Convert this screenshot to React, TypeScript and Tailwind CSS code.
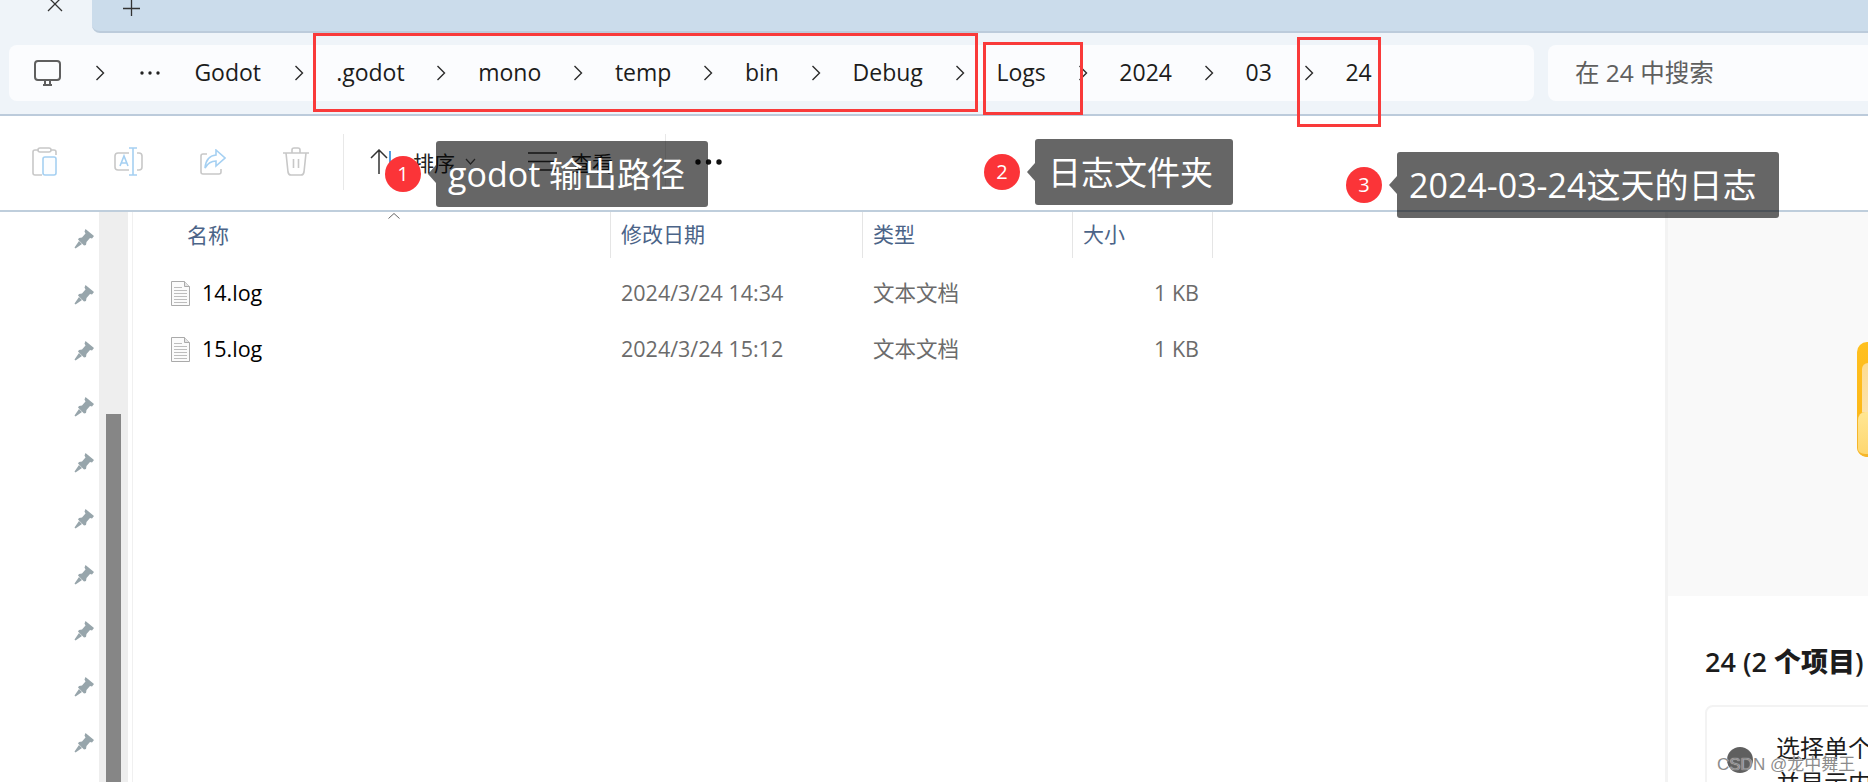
import React from 'react';

const uiFont = '"Open Sans", "Noto Sans CJK SC", sans-serif';

const Chevron = () => (
  <svg width="10" height="16" viewBox="0 0 10 16" fill="none" stroke="#2b2b2b" strokeWidth="1.4" className="shrink-0">
    <path d="M1.5 1 L8.5 8 L1.5 15" />
  </svg>
);

const Pin = () => (
  <svg width="20" height="20" viewBox="0 0 20 20" fill="#97a5ab">
    <path d="M11.5 0 L20 7 L18 9.5 L16 9 L12.5 13 L12 16 L10 16.5 L4 10.5 L5 9 L8 8.5 L11.5 4.5 L10.5 2.5 Z" />
    <path d="M5 12 L8 15 L1.5 19.5 L0.5 18.5 Z" />
  </svg>
);

const FileIcon = () => (
  <svg width="19" height="25" viewBox="0 0 19 25" fill="none" className="shrink-0">
    <path d="M0.5 0.5 H13.5 L18.5 5.5 V24.5 H0.5 Z" fill="#fbfbfb" stroke="#aaaaaa" />
    <path d="M13.5 0.5 V5.5 H18.5" fill="#e4e4e4" stroke="#aaaaaa" />
    <path d="M3 6.5 H11 M3 9.5 H16 M3 12.5 H16 M3 15.5 H16 M3 18.5 H16 M3 21.5 H16" stroke="#bdbdbd" />
  </svg>
);

const Crumb = ({ text, className = '' }: { text: string; className?: string }) => (
  <span className={`shrink-0 text-[#1c1c1c] ${className}`}>{text}</span>
);

// red badge, small arrow and dark label sitting on top of the window
function Callout({ num, text, className, labelClass }: { num: number; text: string; className: string; labelClass: string }) {
  return (
    <div className={`absolute flex items-center ${className}`}>
      <div className="w-[36px] h-[36px] rounded-full bg-[#fb3438] text-white text-[20px] flex items-center justify-center shrink-0">
        {num}
      </div>
      <div className="ml-[7px] w-0 h-0 border-y-[9px] border-y-transparent border-r-[8px] border-r-black/60" />
      <div className={`h-[66px] rounded-[3px] bg-black/60 text-white leading-none flex items-center whitespace-nowrap shrink-0 ${labelClass}`}>
        {text}
      </div>
    </div>
  );
}

const Column = ({ label, className }: { label: string; className: string }) => (
  <div className={`h-[46px] border-r border-[#e5e5e5] flex items-center pl-[10px] text-[#4b6488] shrink-0 ${className}`}>{label}</div>
);

function FileRow({ name, date }: { name: string; date: string }) {
  return (
    <div className="h-[56px] flex items-center text-[21.5px]">
      <div className="w-[478px] pl-[38px] flex items-center gap-[12px] text-black shrink-0">
        <FileIcon />
        <span>{name}</span>
      </div>
      <div className="w-[252px] pl-[10px] text-[#6b6b6b] shrink-0">{date}</div>
      <div className="w-[210px] pl-[10px] text-[#6b6b6b] shrink-0">文本文档</div>
      <div className="w-[126px] text-right text-[#6b6b6b] shrink-0">1 KB</div>
    </div>
  );
}

export default function App() {
  return (
    <div className="relative w-[1868px] h-[783px] overflow-hidden bg-white" style={{ fontFamily: uiFont }}>
      {/* Tab strip */}
      <div className="h-[33px] flex bg-[#eff4f9]">
        <div className="w-[92px] h-full overflow-hidden pl-[47px] shrink-0">
          <svg width="16" height="13" viewBox="0 0 16 13" stroke="#333" strokeWidth="1.3"><path d="M1 -3 L15 11 M15 -3 L1 11" /></svg>
        </div>
        <div className="flex-1 h-[33px] bg-[#cbdceb] rounded-bl-[8px] border-b-2 border-[#bccbdb] pl-[31px]">
          <svg width="17" height="17" viewBox="0 0 17 17" stroke="#333" strokeWidth="1.3"><path d="M8.5 0 V16 M0 8.5 H17" /></svg>
        </div>
      </div>

      {/* Address row */}
      <div className="h-[83px] bg-[#eff4f9] border-b-2 border-[#bccbdb] pt-[12px] pl-[9px] flex gap-[14px]">
        <div className="w-[1525px] h-[56px] rounded-[8px] bg-[#fbfcfe] flex items-center pl-[25px] pb-[1px] gap-[31.8px] text-[23px] shrink-0">
          <svg width="27" height="26" viewBox="0 0 27 26" fill="none" stroke="#5f5f5f" strokeWidth="2" className="mr-[2px] shrink-0">
            <rect x="1" y="1" width="25" height="19" rx="3" />
            <path d="M9 25 H18 M11 21 V24 M16 21 V24" />
          </svg>
          <Chevron />
          <svg width="20" height="4" viewBox="0 0 20 4" fill="#222" className="mx-[3px] shrink-0">
            <circle cx="2" cy="2" r="1.7" /><circle cx="10" cy="2" r="1.7" /><circle cx="18" cy="2" r="1.7" />
          </svg>
          <Crumb text="Godot" className="mr-[1.5px]" /><Chevron />
          <Crumb text=".godot" /><Chevron />
          <Crumb text="mono" /><Chevron />
          <Crumb text="temp" /><Chevron />
          <Crumb text="bin" /><Chevron />
          <Crumb text="Debug" /><Chevron />
          <Crumb text="Logs" /><Chevron />
          <Crumb text="2024" /><Chevron />
          <Crumb text="03" /><Chevron />
          <Crumb text="24" />
        </div>
        <div className="flex-1 h-[56px] rounded-l-[8px] bg-[#fbfcfe] flex items-center pl-[27px] pt-[1px] text-[24.5px] text-[#5f5f5f]">在 24 中搜索</div>
      </div>

      {/* Command bar */}
      <div className="h-[96px] border-b-2 border-[#bfcedc] flex items-center pl-[32px] pb-[3px]">
        <svg width="25" height="29" viewBox="0 0 25 29" fill="none" strokeWidth="1.6" className="shrink-0">
          <path d="M6 3 H3 Q1 3 1 5 V26 Q1 28 3 28 H10 M19 3 H22 Q24 3 24 5 V8" stroke="#c8c8c8" />
          <rect x="6" y="1" width="13" height="4" rx="2" stroke="#c8c8c8" />
          <rect x="11" y="10" width="13" height="18" rx="2" stroke="#a5d0f2" fill="#fbfdff" />
        </svg>
        <svg width="29" height="29" viewBox="0 0 29 29" fill="none" strokeWidth="1.6" className="ml-[57px] shrink-0">
          <path d="M15 6 H4 Q1 6 1 9 V20 Q1 23 4 23 H15 M23 6 H25 Q28 6 28 9 V20 Q28 23 25 23 H23" stroke="#c8c8c8" />
          <path d="M15 1 H23 M19 1 V28 M15 28 H23 M6 19 L10 9 L14 19 M7.5 16 H12.5" stroke="#a5d0f2" />
        </svg>
        <svg width="26" height="26" viewBox="0 0 26 26" fill="none" strokeWidth="1.6" className="ml-[57px] shrink-0">
          <path d="M7 5 H3 Q1 5 1 7 V23 Q1 25 3 25 H19 Q21 25 21 23 V20" stroke="#c8c8c8" />
          <path d="M16 1 L25 9 L16 17 V12 Q9 12 5 19 Q6 7 16 6 Z" stroke="#a5d0f2" />
        </svg>
        <svg width="26" height="29" viewBox="0 0 26 29" fill="none" stroke="#c8c8c8" strokeWidth="1.6" className="ml-[57px] shrink-0">
          <path d="M0 6 H26 M9 6 V3 Q9 1 11 1 H15 Q17 1 17 3 V6 M3 6 L5 25 Q5.5 28 8 28 H18 Q20.5 28 21 25 L23 6 M10.5 12 V21 M15.5 12 V21" />
        </svg>
        <div className="ml-[34px] w-px h-[56px] bg-[#e8e8e8] shrink-0" />
        <svg width="33" height="26" viewBox="0 0 33 26" fill="none" strokeWidth="1.5" className="ml-[26px] shrink-0">
          <path d="M1 9 L9 1 L17 9 M9 1 V25" stroke="#333" />
          <path d="M20 2 V24 L25 19" stroke="#1f7fd6" />
        </svg>
        <span className="ml-[10px] mt-[4px] text-[21px] text-[#222] shrink-0">排序</span>
        <svg width="11" height="7" viewBox="0 0 11 7" fill="none" stroke="#555" strokeWidth="1.2" className="ml-[10px] shrink-0"><path d="M1 1 L5.5 6 L10 1" /></svg>
        <svg width="29" height="19" viewBox="0 0 29 19" stroke="#333" strokeWidth="1.5" className="ml-[52px] shrink-0"><path d="M0 1 H29 M0 9.5 H29 M0 18 H29" /></svg>
        <span className="ml-[14px] mt-[4px] text-[21px] text-[#222] shrink-0">查看</span>
        <div className="ml-[52px] w-px h-[56px] bg-[#e8e8e8] shrink-0" />
        <svg width="27" height="6" viewBox="0 0 27 6" fill="#111" className="ml-[29px] shrink-0">
          <circle cx="3" cy="3" r="2.7" /><circle cx="13.5" cy="3" r="2.7" /><circle cx="24" cy="3" r="2.7" />
        </svg>
      </div>

      {/* Main area */}
      <div className="flex h-[570px]">
        <div className="w-[99px] pt-[17px] pl-[74px] flex flex-col gap-[36px] shrink-0">
          {Array.from({ length: 10 }).map((_, i) => <Pin key={i} />)}
        </div>
        <div className="w-[29px] bg-[#eeeeee] pl-[7px] pt-[202px] shrink-0">
          <div className="w-[15px] h-full bg-[#868686]" />
        </div>
        <div className="w-[4px] shrink-0" />
        <div className="w-px bg-[#f0f0f0] shrink-0" />

        {/* File list */}
        <div className="w-[1533px] shrink-0">
          <div className="relative flex text-[21px]">
            <Column label="" className="w-[478px]" />
            <span className="absolute left-[54px] top-[8px] text-[#4b6488]">名称</span>
            <svg width="12" height="6" viewBox="0 0 12 6" fill="none" stroke="#666" className="absolute left-[255px] top-[1px]"><path d="M0.5 5.5 L6 0.5 L11.5 5.5" /></svg>
            <Column label="修改日期" className="w-[252px]" />
            <Column label="类型" className="w-[210px]" />
            <Column label="大小" className="w-[140px]" />
          </div>
          <div className="pt-[7px]">
            <FileRow name="14.log" date="2024/3/24 14:34" />
            <FileRow name="15.log" date="2024/3/24 15:12" />
          </div>
        </div>

        {/* Details pane */}
        <div className="flex-1 border-l-[3px] border-[#f3f3f3] flex flex-col overflow-hidden -ml-[1px]">
          <div className="h-[384px] bg-[#f9f9f9] pt-[130px] pl-[189px] shrink-0">
            <div className="relative w-[40px] h-[115px] rounded-l-[10px] bg-gradient-to-b from-[#ffc01f] to-[#fbb416] overflow-hidden">
              <div className="absolute left-[5px] top-[21px] w-[40px] h-[60px] rounded-tl-[6px] bg-gradient-to-b from-[#fddc90] to-[#fce3b0]" />
              <div className="absolute left-0 top-[70px] w-[40px] h-[45px] rounded-l-[8px] bg-gradient-to-b from-[#ffe693] to-[#fed76f] border-b-[3px] border-l border-[#f6b62a]" />
            </div>
          </div>
          <div className="pl-[37px] pt-[48px]">
            <div className="text-[27px] leading-[36px] font-semibold text-[#1c1c1c] whitespace-nowrap">24 (2 <b>个项目</b>)</div>
            <div className="mt-[25px] w-[400px] h-[120px] border-2 border-[#f3f3f3] rounded-[8px] flex items-start pt-[23px] pl-[20px]">
              <div className="mt-[17px] w-[26px] h-[26px] rounded-full bg-[#5f5f5f] shrink-0" />
              <div className="ml-[23px] text-[24px] leading-[35px] text-[#1c1c1c] whitespace-nowrap">选择单个<br />并显示内</div>
            </div>
          </div>
        </div>
      </div>

      {/* Annotations */}
      <div className="absolute left-[313px] top-[33px] w-[665px] h-[79px] border-[3px] border-[#f93a3a]" />
      <div className="absolute left-[983px] top-[42px] w-[100px] h-[73px] border-[3px] border-[#f93a3a]" />
      <div className="absolute left-[1297px] top-[37px] w-[84px] h-[90px] border-[3px] border-[#f93a3a]" />
      <Callout num={1} text="godot 输出路径" className="left-[385px] top-[141px]" labelClass="w-[272px] pl-[12px] text-[34px]" />
      <Callout num={2} text="日志文件夹" className="left-[984px] top-[139px]" labelClass="w-[198px] pl-[13px] text-[33px]" />
      <Callout num={3} text="2024-03-24这天的日志" className="left-[1346px] top-[152px]" labelClass="w-[382px] pl-[12px] text-[34px]" />

      {/* Watermark */}
      <div className="absolute left-[1717px] top-[752px] text-[17px] text-[#8c8c8c] [text-shadow:0_0_1px_#fff] whitespace-nowrap" style={{ fontFamily: '"Liberation Sans", "Noto Sans CJK SC", sans-serif' }}>CSDN @龙中舞王</div>
    </div>
  );
}
